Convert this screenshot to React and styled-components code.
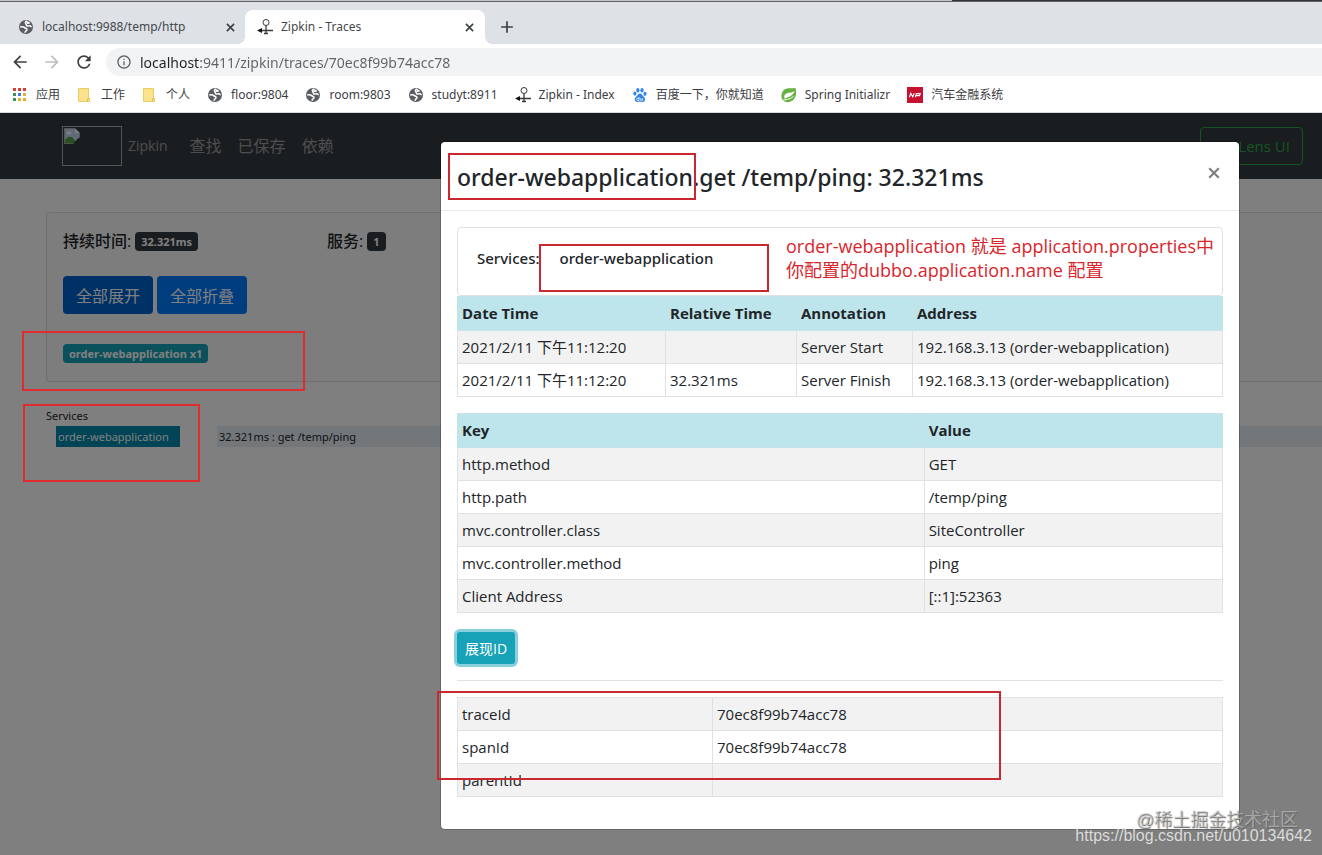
import React from 'react';
import styled, { createGlobalStyle, css } from 'styled-components';
import { MdArrowBack, MdArrowForward, MdRefresh, MdInfoOutline, MdAdd } from 'react-icons/md';

const GlobalStyle = createGlobalStyle`
    * {
        box-sizing: border-box;
    }

    body {
        margin: 0;
        overflow: hidden;
        background: #fff;
        color: #212529;
        font-family: 'Open Sans', 'Noto Sans CJK SC', sans-serif;
        font-size: 15px;
        line-height: 24px;
    }

    button {
        font-family: inherit;
    }

    a {
        color: inherit;
        text-decoration: none;
    }
`;

const smallFont = css`
    font-family: 'Noto Sans', 'Noto Sans CJK SC', sans-serif;
`;

// 1. Browser
const Screen = styled.div`
    display: flex;
    flex-direction: column;
    min-height: 100vh;
`;

const BrowserWrapper = styled.header`
    ${smallFont}
`;

const WindowEdge = styled.div`
    display: flex;
    height: 2px;
    border-bottom: 1px solid #606266;
    background: #c4c6c9;

    &::after {
        content: '';
        width: 28%;
        margin-left: auto;
        background: #303236;
    }
`;

const TabStrip = styled.div`
    display: flex;
    align-items: flex-end;
    height: 42px;
    padding-left: 5px;
    background: #dee1e6;
`;

const Tab = styled.div`
    position: relative;
    display: flex;
    align-items: center;
    gap: 8px;
    width: 240px;
    height: 34px;
    padding: 0 7px 0 13px;
    border-radius: 8px 8px 0 0;
    color: #45494d;
    font-size: 12px;

    ${(props) =>
        props.$active &&
        css`
            padding: 0 8px 0 12px;
            background: #fff;

            &::before,
            &::after {
                content: '';
                position: absolute;
                bottom: 0;
                width: 8px;
                height: 8px;
            }
            &::before {
                right: 100%;
                background: radial-gradient(circle at 0 0, transparent 8px, #fff 8px);
            }
            &::after {
                left: 100%;
                background: radial-gradient(circle at 100% 0, transparent 8px, #fff 8px);
            }
        `};
`;

const TabTitle = styled.span`
    flex: 1;
    white-space: nowrap;
`;

const ChromeButton = styled.button`
    display: flex;
    align-items: center;
    justify-content: center;
    width: ${(props) => props.$size || 16}px;
    height: ${(props) => props.$size || 16}px;
    padding: 0;
    border: 0;
    background: none;
    color: ${(props) => (props.disabled ? '#bdbfc1' : '#3c4043')};
`;

const NewTab = styled(ChromeButton)`
    height: 34px;
    margin-left: 12px;
`;

const Toolbar = styled.div`
    display: flex;
    align-items: center;
    gap: 12px;
    height: 36px;
    padding-left: 10px;
    background: #fff;
`;

const AddressBar = styled.label`
    display: flex;
    flex: 1;
    align-items: center;
    gap: 8px;
    height: 28px;
    padding-left: 10px;
    border-radius: 14px 0 0 14px;
    background: #f1f3f4;
    color: #5f6368;
`;

// the host is darker than the rest of the address
const AddressInput = styled.input`
    flex: 1;
    padding: 0;
    border: 0;
    outline: 0;
    background: linear-gradient(90deg, #202124 60px, #5f6368 60px);
    background-clip: text;
    color: transparent;
    font-family: inherit;
    font-size: 14px;
`;

const Bookmarks = styled.nav`
    display: flex;
    align-items: center;
    gap: 17px;
    height: 33px;
    padding: 0 12px 2px;
    border-bottom: 1px solid #d5d8dc;
    background: #fff;
`;

const Bookmark = styled.a`
    display: flex;
    align-items: center;
    gap: 8px;
    color: #3c4043;
    font-size: 12px;
    line-height: 20px;
    white-space: nowrap;
`;

// 2. Zipkin page
const Page = styled.div`
    position: relative;
    flex: 1;
    overflow: hidden;
`;

const Navbar = styled.nav`
    display: flex;
    align-items: center;
    gap: 16px;
    height: 66px;
    padding: 0 19px 0 62px;
    background: #343a40;
    color: rgba(255, 255, 255, 0.5);
`;

const Brand = styled.a`
    display: flex;
    align-items: center;
    gap: 6px;
    margin-right: 6px;
    font-size: 14px;
`;

const BrokenLogo = styled.span`
    width: 60px;
    height: 40px;
    padding: 1px;
    border: 1px solid #a9abad;
    line-height: 0;
`;

const NavLink = styled.a`
    font-size: 16px;
`;

const LensButton = styled.button`
    height: 38px;
    margin-left: auto;
    padding: 0 12px;
    border: 1px solid #28a745;
    border-radius: 4px;
    background: none;
    color: #28a745;
    font-size: 15px;
`;

const Summary = styled.section`
    height: 170px;
    margin: 33px 0 0 46px;
    padding: 16px;
    border: 1px solid #dfdfdf;
    border-right: 0;
    border-radius: 4px 0 0 4px;
    background: #fbfbfb;
`;

const SummaryRow = styled.div`
    display: flex;
    gap: 4px;
    margin-bottom: ${(props) => props.$space || 0}px;
`;

const Stat = styled.strong`
    display: flex;
    align-items: center;
    gap: 4px;
    width: 260px;
    font-size: 16px;
    font-weight: 500;
`;

const Badge = styled.span`
    ${smallFont}
    padding: 0 6px;
    border-radius: 4px;
    background: ${(props) => props.$color || '#343a40'};
    color: #fff;
    font-size: 11px;
    font-weight: 700;
    line-height: 19px;
`;

const PrimaryButton = styled.button`
    width: 90px;
    height: 38px;
    padding: 0;
    border: 0;
    border-radius: 4px;
    background: ${(props) => (props.$active ? '#0062cc' : '#007bff')};
    color: #fff;
    font-size: 16px;
`;

const Timeline = styled.section`
    ${smallFont}
    padding: 23px 0 0 46px;
    font-size: 11px;
    line-height: 21px;
    white-space: nowrap;
`;

const SpanRow = styled.div`
    display: flex;
    gap: 37px;
    padding-left: 10px;
`;

const ServiceName = styled.span`
    width: 124px;
    padding: 0 2px;
    background: #0088aa;
    color: #fff;
`;

const SpanBar = styled.span`
    flex: 1;
    padding-left: 2px;
    background: #e6eef5;
`;

// 3. Modal
const Backdrop = styled.div`
    position: absolute;
    inset: 0;
    padding: 29px 83px 0 441px;
    background: rgba(0, 0, 0, 0.5);
`;

const Dialog = styled.div`
    position: relative;
    border-radius: 4px;
    background: #fff;
    box-shadow: 0 0 0 1px rgba(0, 0, 0, 0.2);
`;

const DialogHeader = styled.header`
    ${smallFont}
    display: flex;
    align-items: flex-start;
    justify-content: space-between;
    height: 69px;
    padding: 21px 15px 0 16px;
    border-bottom: 1px solid #e9ecef;

    h5 {
        margin: 0;
        font-size: 23px;
        font-weight: 500;
        line-height: 28px;
        white-space: nowrap;
    }
`;

const DialogBody = styled.div`
    padding: 16px;
`;

const ServiceBox = styled.div`
    ${smallFont}
    display: flex;
    gap: 20px;
    height: 69px;
    padding: 18px 19px;
    border: 1px solid #dfe2e5;
    border-radius: 4px;
    font-weight: 500;
`;

const DataTable = styled.table`
    width: 100%;
    margin-bottom: 16px;
    border-collapse: collapse;
    table-layout: fixed;

    th,
    td {
        height: 33px;
        padding: 0 4px;
        border: 1px solid #dee2e6;
        text-align: left;
        font-weight: 400;
    }

    thead th {
        height: 34px;
        padding-bottom: 2px;
        background: #bee5eb;
        border-color: #c6e3e7;
        font-weight: 700;
    }

    tbody tr:nth-child(odd) {
        background: #f2f2f2;
    }
`;

const Col = styled.col`
    width: ${(props) => props.$width};
`;

const IdButton = styled.button`
    display: block;
    height: 32px;
    margin: 19px 0 16px;
    padding: 0 8px;
    border: 0;
    border-radius: 3px;
    background: #17a2b8;
    box-shadow: 0 0 0 3px #88d0db;
    color: #fff;
    font-size: 14px;
`;

const Rule = styled.hr`
    margin: 0 0 16px;
    border: 0;
    border-top: 1px solid #e2e2e2;
`;

// 4. Notes drawn over the page
const Mark = styled.div`
    position: absolute;
    top: ${(props) => props.$top}px;
    left: ${(props) => props.$left}px;
    width: ${(props) => props.$width}px;
    height: ${(props) => props.$height}px;
    border: 2px solid ${(props) => props.$color || '#c9292e'};
    pointer-events: none;
`;

const Note = styled.p`
    position: absolute;
    top: 92px;
    left: 345px;
    margin: 0;
    color: #d9262c;
    font-size: 18px;
    white-space: nowrap;
`;

const Watermark = styled.div`
    position: absolute;
    right: 10px;
    bottom: 11px;
    display: flex;
    flex-direction: column;
    align-items: flex-end;
    color: #dcdcdc;
    font-family: 'Liberation Sans', 'Noto Sans CJK SC', sans-serif;
    font-size: 16px;
    line-height: 16px;
    text-shadow: 0 0 1px #777;

    span:first-child {
        margin-right: 14px;
        color: rgba(200, 200, 200, 0.6);
        font-size: 18px;
        text-shadow: 1px 1px 1px #666;
    }
`;

const CloseIcon = ({ size = 9 }) => (
    <svg width={size} height={size} viewBox="0 0 10 10" fill="none" stroke="currentColor" strokeWidth="1.8">
        <path d="M1 1L9 9M9 1L1 9" />
    </svg>
);

const DialogClose = styled(ChromeButton)`
    color: #7f7f7f;
`;

const GlobeIcon = () => (
    <svg width="16" height="16" viewBox="0 0 16 16">
        <circle cx="8" cy="8" r="7" fill="#5a5d61" />
        <path
            d="M9 1.8C7.6 2.6 6.8 3.6 7.8 4.6C8.6 5.4 8 6.6 9.2 7C10.4 7.4 11 6.4 12 6.8C12.8 7.1 13.3 7.8 13.8 7.6M2.2 8C3.6 7.8 5.6 7.6 6.6 8.6C7.4 9.4 9 9.2 9 10.4C9 11.8 7.2 11.2 7 13.8"
            fill="none"
            stroke="#fff"
            strokeWidth="1.5"
        />
        <path d="M9 2.2L11.5 3L12 4.5L10 5L8 4.5Z" fill="#fff" />
    </svg>
);

const ZipkinIcon = () => (
    <svg width="16" height="16" viewBox="0 0 16 16" fill="none" stroke="#3a3a3a">
        <circle cx="9" cy="3.5" r="3" />
        <path d="M9 6.5V14M4 11.5H16M7 14.5H11" strokeWidth="1.3" />
        <path d="M0 11.5L5 9V14Z" fill="#111" stroke="none" />
    </svg>
);

const AppsIcon = () => {
    const colors = ['#d93f35', '#d93f35', '#d93f35', '#3a9457', '#3f7be0', '#e5b02c', '#3a9457', '#e5b02c', '#e5b02c'];
    return (
        <svg width="16" height="16" viewBox="0 0 16 16">
            {colors.map((color, i) => (
                <rect key={i} x={(i % 3) * 5 + 1} y={Math.floor(i / 3) * 5 + 1} width="3" height="3" fill={color} />
            ))}
        </svg>
    );
};

const FolderIcon = () => (
    <svg width="16" height="16" viewBox="0 0 16 16">
        <path d="M1.5 1.5H11.5V11L12.5 11.5V14.5H1.5Z" fill="#fbe28d" stroke="#ecca64" />
        <path d="M10.5 14.5V11.5H12.5" fill="none" stroke="#e2bd50" />
    </svg>
);

const BaiduIcon = () => (
    <svg width="16" height="16" viewBox="-1 0 16 16" fill="#3385e8">
        <ellipse cx="1.9" cy="6.6" rx="1.6" ry="2.1" />
        <ellipse cx="4.9" cy="3.3" rx="1.6" ry="2.2" />
        <ellipse cx="9" cy="3.3" rx="1.6" ry="2.2" />
        <ellipse cx="12" cy="6.8" rx="1.6" ry="2.1" />
        <path d="M7 6.6C9 6.6 9.4 8.6 11 10C12.6 11.4 12.7 14.8 9.8 14.9C8.6 15 8 14.6 7 14.6C6 14.6 5.4 15 4.2 14.9C1.2 14.8 1.3 11.3 3 10C4.6 8.7 5 6.6 7 6.6Z" />
        <path d="M6 10V13.5H4.7C3.3 13.5 3.3 11.3 4.7 11.3H6M7.7 11.2V13.2H9.7V11.2" fill="none" stroke="#fff" strokeWidth="0.8" />
    </svg>
);

const SpringIcon = () => (
    <svg width="16" height="16" viewBox="0 0 16 16">
        <path d="M14.4 0.8C15.8 5 15.4 9.4 13 12C10 15.7 5 16 2.2 13.6C-0.6 10.8 0 5.5 3.3 2.6C6.5 0.2 11.5 2 14.4 0.8Z" fill="#69b044" />
        <path
            d="M14 3.6C12 6 8 5.4 5.4 6.6C2.8 8 2.8 10.6 4.2 11.8C5 10 7 10.4 9 9.4C11 8.4 12.4 7 14 3.6Z"
            fill="#fff"
        />
        <path d="M2 13.2C4 12.4 8.500 13 12.5 9.4" fill="none" stroke="#fff" />
    </svg>
);

const NpIcon = () => (
    <svg width="16" height="16" viewBox="0 0 16 16">
        <rect width="16" height="16" fill="#c4122f" />
        <path d="M2.4 10.2L3.8 6.4L5.8 9.8L7.2 6.2M8.3 10.2L9.4 6.6H13.2L12.6 8.6H9" fill="none" stroke="#fff" strokeWidth="1.1" />
    </svg>
);

const BrokenImageIcon = () => (
    <svg width="16" height="16" viewBox="0 0 16 16">
        <path d="M0.5 0.5H11L15.5 5V10L10 15.5H0.5Z" fill="#c3d5ee" stroke="#a9abad" />
        <path d="M11 0.5V5H15.5Z" fill="#fff" />
        <path d="M1 15V12C4 8 7 8 10 11L11.5 14L10 15.5Z" fill="#4fa33b" />
        <path d="M9 15.5L15.5 9V15.5Z" fill="#343a40" />
        <ellipse cx="5" cy="5" rx="2.5" ry="1.5" fill="#fff" />
    </svg>
);

const bookmarks = [
    { icon: <AppsIcon />, text: '应用' },
    { icon: <FolderIcon />, text: '工作' },
    { icon: <FolderIcon />, text: '个人' },
    { icon: <GlobeIcon />, text: 'floor:9804' },
    { icon: <GlobeIcon />, text: 'room:9803' },
    { icon: <GlobeIcon />, text: 'studyt:8911' },
    { icon: <ZipkinIcon />, text: 'Zipkin - Index' },
    { icon: <BaiduIcon />, text: '百度一下，你就知道' },
    { icon: <SpringIcon />, text: 'Spring Initializr' },
    { icon: <NpIcon />, text: '汽车金融系统' },
];

const annotations = [
    ['2021/2/11 下午11:12:20', '', 'Server Start', '192.168.3.13 (order-webapplication)'],
    ['2021/2/11 下午11:12:20', '32.321ms', 'Server Finish', '192.168.3.13 (order-webapplication)'],
];

const tags = [
    ['http.method', 'GET'],
    ['http.path', '/temp/ping'],
    ['mvc.controller.class', 'SiteController'],
    ['mvc.controller.method', 'ping'],
    ['Client Address', '[::1]:52363'],
];

const ids = [
    ['traceId', '70ec8f99b74acc78'],
    ['spanId', '70ec8f99b74acc78'],
    ['parentId', ''],
];

const SpanTable = ({ widths, head, rows }) => (
    <DataTable>
        <colgroup>
            {widths.map((width, i) => (
                <Col key={i} $width={width} />
            ))}
        </colgroup>
        {head && (
            <thead>
                <tr>
                    {head.map((text) => (
                        <th key={text}>{text}</th>
                    ))}
                </tr>
            </thead>
        )}
        <tbody>
            {rows.map((row, i) => (
                <tr key={i}>
                    {row.map((text, j) => (
                        <td key={j}>{text}</td>
                    ))}
                </tr>
            ))}
        </tbody>
    </DataTable>
);

const Browser = () => (
    <BrowserWrapper>
        <WindowEdge />
        <TabStrip>
            <Tab>
                <GlobeIcon />
                <TabTitle>localhost:9988/temp/http</TabTitle>
                <ChromeButton aria-label="Close tab">
                    <CloseIcon />
                </ChromeButton>
            </Tab>
            <Tab $active>
                <ZipkinIcon />
                <TabTitle>Zipkin - Traces</TabTitle>
                <ChromeButton aria-label="Close tab">
                    <CloseIcon />
                </ChromeButton>
            </Tab>
            <NewTab aria-label="New tab" $size={20}>
                <MdAdd size={20} />
            </NewTab>
        </TabStrip>
        <Toolbar>
            <ChromeButton aria-label="Back" $size={20}>
                <MdArrowBack size={20} />
            </ChromeButton>
            <ChromeButton aria-label="Forward" $size={20} disabled>
                <MdArrowForward size={20} />
            </ChromeButton>
            <ChromeButton aria-label="Reload" $size={20}>
                <MdRefresh size={20} />
            </ChromeButton>
            <AddressBar>
                <MdInfoOutline size={16} />
                <AddressInput aria-label="Address" defaultValue="localhost:9411/zipkin/traces/70ec8f99b74acc78" />
            </AddressBar>
        </Toolbar>
        <Bookmarks>
            {bookmarks.map(({ icon, text }) => (
                <Bookmark key={text} href="#">
                    {icon}
                    {text}
                </Bookmark>
            ))}
        </Bookmarks>
    </BrowserWrapper>
);

const TraceDialog = () => (
    <Dialog role="dialog" aria-labelledby="spanTitle">
        <DialogHeader>
            <h5 id="spanTitle">order-webapplication.get /temp/ping: 32.321ms</h5>
            <DialogClose aria-label="Close" $size={20}>
                <CloseIcon size={12} />
            </DialogClose>
        </DialogHeader>
        <DialogBody>
            <ServiceBox>
                <span>Services:</span>
                <span>order-webapplication</span>
            </ServiceBox>
            <SpanTable
                widths={['208px', '131px', '116px', 'auto']}
                head={['Date Time', 'Relative Time', 'Annotation', 'Address']}
                rows={annotations}
            />
            <SpanTable widths={['61%', 'auto']} head={['Key', 'Value']} rows={tags} />
            <IdButton>展现ID</IdButton>
            <Rule />
            <SpanTable widths={['255px', 'auto']} rows={ids} />
        </DialogBody>
        <Mark $top={11} $left={7} $width={248} $height={47} />
        <Mark $top={102} $left={98} $width={230} $height={48} />
        <Mark $top={549} $left={-4} $width={564} $height={89} />
        <Note>
            order-webapplication 就是 application.properties中
            <br />
            你配置的dubbo.application.name 配置
        </Note>
    </Dialog>
);

const App = () => (
    <Screen>
        <GlobalStyle />
        <Browser />
        <Page>
            <Navbar>
                <Brand href="#">
                    <BrokenLogo>
                        <BrokenImageIcon />
                    </BrokenLogo>
                    Zipkin
                </Brand>
                <NavLink href="#">查找</NavLink>
                <NavLink href="#">已保存</NavLink>
                <NavLink href="#">依赖</NavLink>
                <LensButton>Try Lens UI</LensButton>
            </Navbar>
            <Summary>
                <SummaryRow $space={23}>
                    <Stat>
                        持续时间: <Badge>32.321ms</Badge>
                    </Stat>
                    <Stat>
                        服务: <Badge>1</Badge>
                    </Stat>
                </SummaryRow>
                <SummaryRow $space={30}>
                    <PrimaryButton $active>全部展开</PrimaryButton>
                    <PrimaryButton>全部折叠</PrimaryButton>
                </SummaryRow>
                <SummaryRow>
                    <Badge $color="#17a2b8">order-webapplication x1</Badge>
                </SummaryRow>
            </Summary>
            <Timeline>
                <div>Services</div>
                <SpanRow>
                    <ServiceName>order-webapplication</ServiceName>
                    <SpanBar>32.321ms : get /temp/ping</SpanBar>
                </SpanRow>
            </Timeline>
            <Backdrop>
                <TraceDialog />
            </Backdrop>
            <Mark $top={218} $left={22} $width={283} $height={60} $color="#e02b30" />
            <Mark $top={291} $left={23} $width={177} $height={78} $color="#e02b30" />
            <Watermark>
                <span>@稀土掘金技术社区</span>
                <span>https://blog.csdn.net/u010134642</span>
            </Watermark>
        </Page>
    </Screen>
);

export default App;
